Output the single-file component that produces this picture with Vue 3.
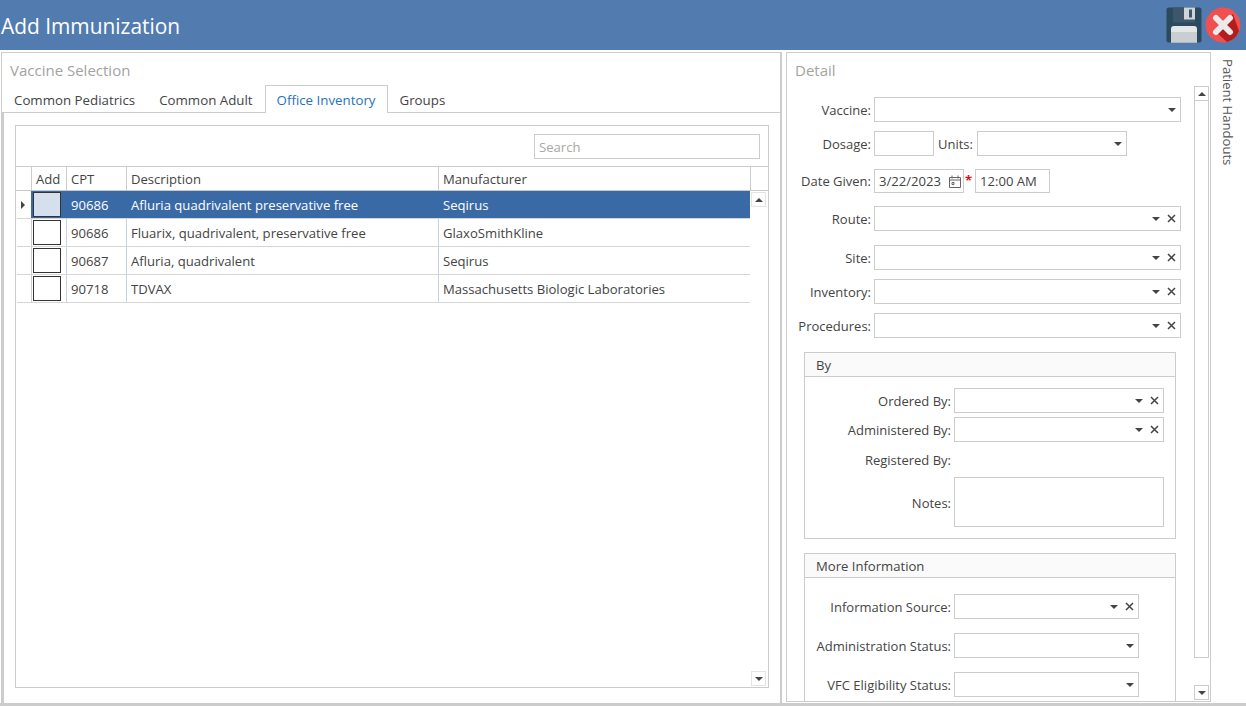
<script setup>
const tabs = [
  { label: 'Common Pediatrics' },
  { label: 'Common Adult' },
  { label: 'Office Inventory', active: true },
  { label: 'Groups' },
]
const rows = [
  { cpt: '90686', desc: 'Afluria quadrivalent preservative free', man: 'Seqirus', selected: true },
  { cpt: '90686', desc: 'Fluarix, quadrivalent, preservative free', man: 'GlaxoSmithKline' },
  { cpt: '90687', desc: 'Afluria, quadrivalent', man: 'Seqirus' },
  { cpt: '90718', desc: 'TDVAX', man: 'Massachusetts Biologic Laboratories' },
]
const topFields = [
  { label: 'Route:', cls: 'mt13' },
  { label: 'Site:', cls: 'mt14' },
  { label: 'Inventory:', cls: 'mt9' },
  { label: 'Procedures:', cls: 'mt9' },
]
</script>

<template>
  <div class="app">
    <header class="topbar">
      <h1 class="title">Add Immunization</h1>
      <div class="actions">
        <svg width="36" height="36" viewBox="0 0 36 36">
          <rect x="0.5" y="0.5" width="35" height="35" rx="2" fill="#2c4a5f" />
          <rect x="7" y="0.5" width="22" height="15" fill="#3d566a" />
          <rect x="18" y="0.5" width="11" height="12" fill="#cfd4d6" />
          <rect x="23" y="2.5" width="3" height="8" fill="#3d566a" />
          <path d="M5 35.5V22q0-3 3-3h20q3 0 3 3v13.5z" fill="#e4e7e8" />
          <path d="M5 35.5V25h26v10.5z" fill="#c9ced1" />
        </svg>
        <svg width="36" height="36" viewBox="0 0 36 36">
          <circle cx="18" cy="18" r="17.5" fill="#f0504f" />
          <path d="M28 7 L34 24 A17.5 17.5 0 0 1 22 35 L10 24z" fill="#b51c1c" />
          <path d="M11 11 L25 25 M25 11 L11 25" stroke="#eceaea" stroke-width="6" stroke-linecap="round" />
        </svg>
      </div>
    </header>

    <main class="body">
      <section class="left">
        <div class="panel-title">Vaccine Selection</div>
        <nav class="tabs">
          <span v-for="t in tabs" :key="t.label" class="tab" :class="{ active: t.active }">{{ t.label }}</span>
        </nav>
        <div class="tab-body">
          <div class="card">
            <div class="toolbar"><div class="search">Search</div></div>
            <div class="grid-row head">
              <div class="c c0"></div>
              <div class="c c1">Add</div>
              <div class="c c2">CPT</div>
              <div class="c c3">Description</div>
              <div class="c c4">Manufacturer</div>
              <div class="c c5"></div>
            </div>
            <div class="grid-body">
              <div v-for="r in rows" :key="r.cpt + r.desc" class="grid-row data" :class="{ selected: r.selected }">
                <div class="c0"><i v-if="r.selected" class="pointer"></i></div>
                <div class="c1"><span class="check"></span></div>
                <div class="c c2">{{ r.cpt }}</div>
                <div class="c c3">{{ r.desc }}</div>
                <div class="c c4">{{ r.man }}</div>
              </div>
              <div class="sb-btn sb-up"><i class="arrow up"></i></div>
              <div class="sb-btn sb-down"><i class="arrow"></i></div>
            </div>
          </div>
        </div>
      </section>

      <section class="right">
        <div class="panel-title">Detail</div>
        <div class="detail-wrap">
          <div class="form">
            <div class="row row-first">
              <label class="lab">Vaccine:</label>
              <div class="ctl wide"><i class="arrow"></i></div>
            </div>
            <div class="row row-dosage">
              <label class="lab">Dosage:</label>
              <div class="ctl dosage"></div>
              <label class="units-lab">Units:</label>
              <div class="ctl units"><i class="arrow"></i></div>
            </div>
            <div class="row row-date">
              <label class="lab">Date Given:</label>
              <div class="ctl date">
                <span class="val">3/22/2023</span>
                <svg class="cal" width="12" height="13" viewBox="0 0 12 13">
                  <path d="M.5 2.5h11v10H.5zM.5 5h11M3 .5v3M9 .5v3M3 7.5h2v2H3z" fill="none" stroke="#666" />
                </svg>
              </div>
              <span class="req">*</span>
              <div class="ctl time"><span class="val">12:00 AM</span></div>
            </div>
            <div v-for="f in topFields" :key="f.label" class="row" :class="f.cls">
              <label class="lab">{{ f.label }}</label>
              <div class="ctl wide">
                <i class="arrow shift"></i>
                <svg class="x" width="9" height="9" viewBox="0 0 9 9"><path d="M1 1l7 7M8 1L1 8" stroke="#444" stroke-width="1.5" /></svg>
              </div>
            </div>

            <div class="group group-by">
              <div class="group-head">By</div>
              <div class="group-body">
                <div class="row">
                  <label class="lab lab2">Ordered By:</label>
                  <div class="ctl wide2">
                    <i class="arrow shift"></i>
                    <svg class="x" width="9" height="9" viewBox="0 0 9 9"><path d="M1 1l7 7M8 1L1 8" stroke="#444" stroke-width="1.5" /></svg>
                  </div>
                </div>
                <div class="row row-gap4">
                  <label class="lab lab2">Administered By:</label>
                  <div class="ctl wide2">
                    <i class="arrow shift"></i>
                    <svg class="x" width="9" height="9" viewBox="0 0 9 9"><path d="M1 1l7 7M8 1L1 8" stroke="#444" stroke-width="1.5" /></svg>
                  </div>
                </div>
                <div class="row row-reg">
                  <label class="lab lab2">Registered By:</label>
                </div>
                <div class="row row-notes">
                  <label class="lab lab2 down1">Notes:</label>
                  <div class="ctl wide2 notes"></div>
                </div>
              </div>
            </div>

            <div class="group group-more">
              <div class="group-head">More Information</div>
              <div class="group-body more-body">
                <div class="row">
                  <label class="lab lab2">Information Source:</label>
                  <div class="ctl wide3">
                    <i class="arrow shift"></i>
                    <svg class="x" width="9" height="9" viewBox="0 0 9 9"><path d="M1 1l7 7M8 1L1 8" stroke="#444" stroke-width="1.5" /></svg>
                  </div>
                </div>
                <div class="row row-gap14">
                  <label class="lab lab2">Administration Status:</label>
                  <div class="ctl wide3"><i class="arrow"></i></div>
                </div>
                <div class="row row-gap14">
                  <label class="lab lab2">VFC Eligibility Status:</label>
                  <div class="ctl wide3"><i class="arrow"></i></div>
                </div>
              </div>
            </div>
          </div>
          <div class="vscroll">
            <div class="vs-track"><div class="vs-btn"><i class="arrow up"></i></div></div>
            <div class="vs-btn vs-end"><i class="arrow"></i></div>
          </div>
        </div>
      </section>

      <aside class="handouts">Patient Handouts</aside>
    </main>
  </div>
</template>

<style>
html, body { margin: 0; padding: 0; background: #fff; overflow: hidden; }
</style>

<style scoped>
* { box-sizing: border-box; }
.app {
  width: 1246px; height: 706px; display: flex; flex-direction: column; overflow: hidden;
  font-family: "Open Sans", "Noto Sans", sans-serif; font-size: 13.1px; color: #444; background: #fff;
}
.topbar {
  height: 50px; flex: none; background: #527cb0; display: flex; align-items: center;
  justify-content: space-between; padding: 0 5px 0 1px;
}
.title { margin: 0; padding-top: 2px; font-size: 20.9px; font-weight: 400; color: #fff; }
.actions { display: flex; gap: 3px; padding-bottom: 1px; }

.body {
  flex: 1; min-height: 0; display: flex; padding: 2px 0 0 1px; border-bottom: 3px solid #ccc;
}
.left {
  width: 781px; flex: none; border: 1px solid #ccc; border-right-width: 2px; border-bottom: 0;
  display: flex; flex-direction: column; margin-right: 4px;
}
.panel-title { font-size: 15px; color: #a3a3a3; padding: 7px 0 0 8px; height: 32px; flex: none; }
.tabs { display: flex; height: 28px; flex: none; position: relative; z-index: 1; font-size: 13.3px; }
.tab { padding: 5px 11px 0; height: 28px; color: #444; white-space: nowrap; border: 1px solid transparent; border-bottom: 0; }
.tab.active { color: #1f73bd; border-color: #ccc; background: #fff; }
.tab-body {
  flex: 1; min-height: 0; margin-top: -1px; border-top: 1px solid #ccc; border-left: 2px solid #ccc;
  padding: 12px 11px 15px 11px;
}
.card { height: 100%; border: 1px solid #ccc; display: flex; flex-direction: column; }
.toolbar { height: 40px; flex: none; display: flex; justify-content: flex-end; padding: 8px 8px 0 0; }
.search { width: 226px; height: 25px; border: 1px solid #ccc; color: #a8a8a8; padding: 3px 4px; }
.grid-row { display: grid; grid-template-columns: 15px 35px 60px 312px 312px; }
.head { height: 25px; border-top: 1px solid #ccc; border-bottom: 1px solid #c8c8c8; grid-template-columns: 15px 35px 60px 312px 312px 1fr; flex: none; padding-left: 1px; }
.head .c { padding: 3px 0 0 4px; border-right: 1px solid #ccc; white-space: nowrap; }
.head .c0 { padding: 0; }
.head .c5 { border-right: 0; }
.grid-body { flex: 1; min-height: 0; position: relative; }
.data { height: 28px; border-bottom: 1px solid #d6d6d6; width: 733px; margin-left: 1px; }
.data .c { padding: 5px 0 0 4px; border-right: 1px solid #c5d3e2; white-space: nowrap; }
.data .c4 { border-right: 0; }
.data .c0 { display: flex; align-items: center; padding-left: 4px; }
.data .c1 { margin-left: -1px; border-left: 1px solid #ccc; border-right: 1px solid #c5d3e2; padding: 1px 1px; }
.check { display: block; width: 28px; height: 25px; border: 1px solid #333; background: #fff; }
.selected { background: linear-gradient(#3a6aa5, #3a6aa5) 14px 0 / 719px 100% no-repeat; color: #fff; }
.selected .c { color: #fff; border-right-color: #3a6aa5; }
.selected .c1 { border-color: #3a6aa5; }
.selected .check { background: #d5e0ec; }
.pointer { width: 0; height: 0; border-left: 4px solid #444; border-top: 4px solid transparent; border-bottom: 4px solid transparent; }

.arrow { display: inline-block; width: 0; height: 0; border-left: 4px solid transparent; border-right: 4px solid transparent; border-top: 4px solid #444; }
.arrow.up { border-top: 0; border-bottom: 4px solid #444; }
.sb-btn { position: absolute; right: 2px; width: 15px; height: 15px; border: 1px solid #e4e4e4; display: flex; align-items: center; justify-content: center; }
.sb-up { top: 1px; }
.sb-down { bottom: 1px; }

.right {
  width: 425px; flex: none; border: 1px solid #ccc; display: flex; flex-direction: column; margin-bottom: 1px;
  overflow: hidden;
}
.detail-wrap { flex: 1; min-height: 0; display: flex; }
.form { flex: 1; min-width: 0; overflow: hidden; }
.vscroll { width: 15px; margin: 1px 1px 0 0; flex: none; display: flex; flex-direction: column; justify-content: space-between; padding-bottom: 1px; }
.vs-track { height: 572px; border: 1px solid #ccc; }
.vs-btn { height: 14px; display: flex; align-items: center; justify-content: center; border-bottom: 1px solid #ccc; }
.vs-end { height: 15px; border: 1px solid #ccc; }

.row { display: flex; align-items: center; }
.row-first { margin-top: 12px; }
.row-dosage { margin-top: 9px; }
.row-date { margin-top: 13px; }
.mt13 { margin-top: 13px; }
.mt14 { margin-top: 14px; }
.mt9 { margin-top: 9px; }
.lab { width: 86px; padding-right: 2px; text-align: right; white-space: nowrap; flex: none; margin-right: 1px; font-size: 13px; }
.ctl { height: 25px; border: 1px solid #ccc; display: flex; align-items: center; justify-content: flex-end; background: #fff; flex: none; padding-right: 4px; }
.wide { width: 307px; }
.dosage { width: 60px; }
.units-lab { margin: 0 4px 0 4px; font-size: 13px; }
.units { width: 150px; }
.date { width: 90px; height: 24px; justify-content: space-between; padding: 0 2px 0 4px; }
.time { width: 75px; height: 24px; justify-content: flex-start; padding: 0 4px; }
.val { color: #444; }
.req { color: #e01515; width: 11px; font-weight: 700; line-height: 1; padding-left: 1px; }
.arrow.shift { margin-right: 7px; }
.x { flex: none; }

.group { margin-left: 17px; width: 372px; border: 1px solid #ccc; }
.group-by { margin-top: 14px; height: 187px; }
.group-more { margin-top: 14px; height: 200px; }
.group-head { height: 24px; background: #fafafa; border-bottom: 1px solid #ccc; padding: 3px 0 0 11px; }
.group-body { padding-top: 11px; }
.more-body { padding-top: 16px; }
.lab2 { width: 148px; }
.wide2 { width: 210px; }
.wide3 { width: 185px; }
.row-gap4 { margin-top: 4px; }
.row-reg { margin-top: 5px; height: 25px; }
.row-notes { margin-top: 5px; }
.notes { height: 50px; }
.down1 { padding-top: 2px; }
.row-gap14 { margin-top: 14px; }

.handouts {
  writing-mode: vertical-rl; padding: 7px 0 0 8px; color: #555; white-space: nowrap;
}
</style>
